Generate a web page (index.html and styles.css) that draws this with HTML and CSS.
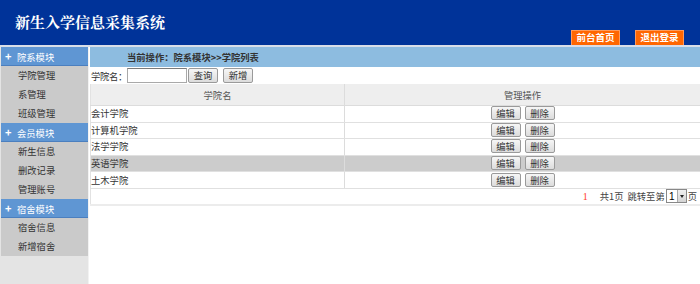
FILE: index.html
```html
<!DOCTYPE html>
<html lang="zh-CN">
<head>
    <meta charset="UTF-8">
    <title>新生入学信息采集系统</title>
    <link rel="stylesheet" href="styles.css">
</head>
<body>
    <div class="header">
        <h1 class="title">新生入学信息采集系统</h1>
        <div class="top-links">
            <a href="#" class="top-btn">前台首页</a>
            <a href="#" class="top-btn">退出登录</a>
        </div>
    </div>
    <div class="wrap">
        <div class="sidebar">
            <div class="menu-title"><span class="plus">+</span>院系模块</div>
            <a href="#" class="menu-item">学院管理</a>
            <a href="#" class="menu-item">系管理</a>
            <a href="#" class="menu-item">班级管理</a>
            <div class="menu-title"><span class="plus">+</span>会员模块</div>
            <a href="#" class="menu-item">新生信息</a>
            <a href="#" class="menu-item">删改记录</a>
            <a href="#" class="menu-item">管理账号</a>
            <div class="menu-title"><span class="plus">+</span>宿舍模块</div>
            <a href="#" class="menu-item">宿舍信息</a>
            <a href="#" class="menu-item">新增宿舍</a>
        </div>
        <div class="main">
            <div class="crumb">当前操作：院系模块&gt;&gt;学院列表</div>
            <form class="toolbar">
                <label for="name">学院名：</label>
                <input type="text" id="name" class="search-input">
                <button type="button" class="btn">查询</button>
                <button type="button" class="btn">新增</button>
            </form>
            <table class="list">
                <tr>
                    <th class="col-name">学院名</th>
                    <th>管理操作</th>
                </tr>
                <tr>
                    <td>会计学院</td>
                    <td class="ops"><button class="btn">编辑</button><button class="btn">删除</button></td>
                </tr>
                <tr>
                    <td>计算机学院</td>
                    <td class="ops"><button class="btn">编辑</button><button class="btn">删除</button></td>
                </tr>
                <tr>
                    <td>法学学院</td>
                    <td class="ops"><button class="btn">编辑</button><button class="btn">删除</button></td>
                </tr>
                <tr class="active">
                    <td>英语学院</td>
                    <td class="ops"><button class="btn">编辑</button><button class="btn">删除</button></td>
                </tr>
                <tr>
                    <td>土木学院</td>
                    <td class="ops"><button class="btn">编辑</button><button class="btn">删除</button></td>
                </tr>
                <tr class="pager-row">
                    <td colspan="2">
                        <div class="pager">
                            <span class="cur">1</span>
                            <span>共1页</span>
                            <span>跳转至第</span>
                            <span class="select"><span class="select-val">1</span><span class="select-arrow"></span></span>
                            <span>页</span>
                        </div>
                    </td>
                </tr>
            </table>
        </div>
    </div>
</body>
</html>
```

FILE: styles.css
```css
body {
    margin: 0;
    padding: 0;
    font-family: "Noto Sans CJK SC", "DejaVu Sans", sans-serif;
    font-size: 9.3px;
    color: #333;
    background: #fff;
}
a {
    text-decoration: none;
}
.header {
    height: 45px;
    background-color: #003399;
    border-bottom: 2px solid #d8dee8;
    display: flex;
    justify-content: space-between;
    padding: 0 16px 0 15px;
}
.title {
    margin: 0;
    padding-top: 12px;
    font-size: 15px;
    line-height: 20px;
    color: #fff;
    font-weight: bold;
    font-family: "Noto Serif CJK SC", "Noto Sans CJK SC", serif;
}
.top-links {
    display: flex;
    align-items: flex-end;
    gap: 15px;
}
.top-btn {
    display: block;
    box-sizing: border-box;
    width: 49px;
    height: 15px;
    line-height: 13px;
    text-align: center;
    background-color: #ff6600;
    border: 1px solid #ff9a5a;
    border-bottom: none;
    color: #fff;
    font-weight: bold;
    font-size: 9.5px;
}
.wrap {
    display: flex;
    height: 237px;
}
.sidebar {
    width: 87px;
    padding-left: 1px;
    border-right: 1px solid #f2f2f2;
    background-color: #e4e4e4;
}
.menu-title {
    box-sizing: border-box;
    height: 19px;
    line-height: 18px;
    background-color: #5f96d3;
    border-bottom: 1px solid #4b7fbf;
    color: #fff;
    padding-left: 4px;
}
.plus {
    display: inline-block;
    width: 12px;
    font-weight: bold;
    font-size: 11px;
}
.menu-item {
    display: block;
    height: 19px;
    line-height: 19px;
    background-color: #cacaca;
    color: #333;
    padding-left: 17px;
}
.main {
    flex: 1;
    margin-left: 1px;
}
.crumb {
    height: 20px;
    line-height: 20px;
    background-color: #8dbce0;
    padding-left: 37px;
    font-weight: bold;
    color: #333;
}
.toolbar {
    display: flex;
    align-items: center;
    height: 17px;
    margin: 0;
    padding-left: 1px;
}
.toolbar label {
    flex-shrink: 0;
    white-space: nowrap;
    width: 36px;
    letter-spacing: -0.3px;
}
.search-input {
    box-sizing: border-box;
    flex-shrink: 0;
    width: 60px;
    height: 15px;
    margin: 0 1px 0 0;
    padding: 0;
    border: 1px solid #a9a9a9;
    border-top-color: #7a7a7a;
}
.btn {
    box-sizing: border-box;
    flex-shrink: 0;
    width: 30px;
    height: 15px;
    padding: 0;
    margin: 0;
    font-family: inherit;
    font-size: 9.3px;
    line-height: 13px;
    color: #333;
    background: linear-gradient(#f6f6f6, #dcdcdc);
    border: 1px solid #9a9a9a;
    border-radius: 2px;
}
.toolbar .btn + .btn {
    margin-left: 5px;
}
.list {
    width: 100%;
    border-collapse: collapse;
    border-left: 1px solid #e2e2e2;
    border-bottom: 2px solid #ececec;
}
.list th {
    height: 21px;
    background-color: #eeeeee;
    font-weight: normal;
    color: #555;
    border-bottom: 1px solid #dcdcdc;
    padding: 0;
}
.list th.col-name {
    width: 253px;
    border-right: 1px solid #dcdcdc;
}
.list td {
    height: 15.6px;
    padding: 0;
    border-bottom: 1px solid #e0e0e0;
    line-height: 15px;
}
.list td:first-child {
    border-right: 1px solid #dcdcdc;
}
.list tr.active td {
    background-color: #cccccc;
}
.ops {
    text-align: center;
    font-size: 0;
}
.ops .btn {
    height: 14px;
    line-height: 12px;
    margin: 0 2px;
    vertical-align: middle;
}
.list tr.pager-row td {
    border-right: none;
    height: 15px;
}
.pager {
    display: flex;
    justify-content: flex-end;
    align-items: center;
    gap: 4px;
    padding-right: 3px;
    color: #444;
}
.pager .cur {
    color: #ff3c1e;
    font-family: "Liberation Serif", serif;
    font-size: 10px;
    margin-right: 8px;
}
.select {
    display: inline-flex;
    align-items: center;
    box-sizing: border-box;
    height: 14px;
    border: 1px solid #888;
    background: #fff;
    margin-left: -3px;
    margin-right: -3px;
}
.select-val {
    width: 10px;
    text-align: center;
    font-family: "Liberation Sans", sans-serif;
    font-size: 10px;
    color: #000;
}
.select-arrow {
    position: relative;
    width: 8px;
    height: 12px;
    background: linear-gradient(#f0f0f0, #d4d4d4);
    border-left: 1px solid #aaa;
}
.select-arrow::after {
    content: "";
    position: absolute;
    left: 2px;
    top: 5px;
    border-left: 2px solid transparent;
    border-right: 2px solid transparent;
    border-top: 3px solid #222;
}
```
